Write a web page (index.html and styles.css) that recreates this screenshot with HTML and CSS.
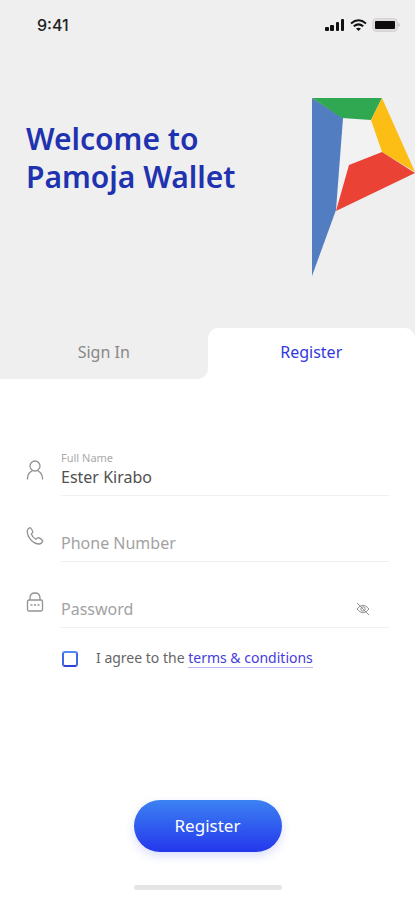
FILE: index.html
```html
<!DOCTYPE html>
<html lang="en">
<head>
<meta charset="utf-8">
<meta name="viewport" content="width=device-width, initial-scale=1">
<title>Pamoja Wallet</title>
<link rel="stylesheet" href="styles.css">
</head>
<body>
<div class="app">
  <header class="hero">
    <div class="status">
      <span class="time">9:41</span>
      <div class="indicators">
        <svg width="20" height="12" viewBox="0 0 20 12" fill="#111" aria-hidden="true">
          <rect x="0" y="8" width="4" height="4" rx="1"/><rect x="5" y="6" width="4" height="6" rx="1"/><rect x="11" y="3" width="3" height="9" rx="1"/><rect x="16" y="0" width="3" height="12" rx="1"/>
        </svg>
        <svg width="17" height="12" viewBox="0 0 17 12" fill="none" stroke="#111" stroke-width="2" aria-hidden="true">
          <path d="M1 4.4Q8.500-1.800 16 4.400M3.800 7.300Q8.500 3.500 13.200 7.300"/><path d="M6 9.600Q8.500 7.800 11 9.600L8.500 12Z" fill="#111" stroke="none"/>
        </svg>
        <svg width="28" height="14" viewBox="0 0 28 14" aria-hidden="true">
          <rect x=".5" y=".5" width="25" height="13" rx="4" fill="#dfdbdf" stroke="#d6d2d6"/><rect x="3" y="3" width="20" height="8" rx="1" fill="#0c0c0c"/><path d="M26.500 5v4q1-.500 1-2t-1-2Z" fill="#aaa"/>
        </svg>
      </div>
    </div>
    <div class="banner">
      <h1>Welcome to<br>Pamoja Wallet</h1>
      <svg class="logo" width="104" height="180" viewBox="0 0 104 180" role="img" aria-label="Pamoja logo">
        <path fill="#f2f2f2" d="M31 20L60 21 71 54 38 67 26 112Z"/>
        <path fill="#537dc1" d="M1 0L32 20 25 112 1 178Z"/>
        <path fill="#30a851" d="M1 0H71L60 22 31 20Z"/>
        <path fill="#fcbd14" d="M71 0L104 74 71 54 60 22Z"/>
        <path fill="#ea4234" d="M38 67L71 54 104 75 25 113Z"/>
      </svg>
    </div>
  </header>
  <nav class="tabs">
    <div class="cell cell-left"><button type="button" class="tab tab-signin">Sign In</button></div>
    <div class="cell cell-right"><button type="button" class="tab tab-register">Register</button></div>
  </nav>
  <form class="form">
    <div class="field">
      <svg class="icon" width="18" height="20" viewBox="0 0 18 20" aria-hidden="true"><circle cx="9" cy="6" r="5"/><path d="M1.500 19.500V18Q2 12.500 6.300 10.800M11.700 10.800Q16 12.500 16.500 18V19.500"/></svg>
      <div class="entry">
        <label for="name">Full Name</label>
        <input id="name" type="text" value="Ester Kirabo">
      </div>
    </div>
    <div class="field">
      <svg class="icon" width="18" height="20" viewBox="0 0 18 20" aria-hidden="true"><path d="M1.300 4.500Q2 2 4.300 1.600Q6 3.200 6.800 5.600Q6.800 7.200 5.300 8Q6.600 11.300 9.800 13.300Q11 11.700 12.600 11.700Q15 12.600 16.700 14.800Q16 17.600 13.500 18Q9 18.200 5 14Q1 9.500 1.300 4.500Z"/></svg>
      <div class="entry">
        <input id="phone" type="tel" placeholder="Phone Number" aria-label="Phone Number">
      </div>
    </div>
    <div class="field">
      <svg class="icon" width="18" height="20" viewBox="0 0 18 20" aria-hidden="true"><rect x="1.500" y="8" width="15" height="11" rx="1.500"/><path d="M4 8V6Q4 1 9 1T14 6V8"/><path d="M4.500 13h2M8 13h2M11.500 13h2"/></svg>
      <div class="entry entry-password">
        <input id="password" type="password" placeholder="Password" aria-label="Password">
        <button type="button" class="reveal" aria-label="Show password">
          <svg width="14" height="14" viewBox="0 0 14 14" fill="none" stroke="#929292" aria-hidden="true"><path d="M1 7Q7-.500 13 7Q7 14.500 1 7Z"/><circle cx="7" cy="7" r="2.200"/><path d="M1 1L13 13"/></svg>
        </button>
      </div>
    </div>
    <div class="agree">
      <input id="agree" type="checkbox">
      <label for="agree">I agree to the <a href="#terms">terms &amp; conditions</a></label>
    </div>
    <button type="submit" class="submit">Register</button>
  </form>
  <div class="home"></div>
</div>
</body>
</html>
```
FILE: styles.css
```css
* { box-sizing: border-box; }
body {
  margin: 0;
  background: #fff;
  font-family: "Noto Sans", sans-serif;
  font-size: 16px;
}
button, input { font: inherit; }
button { border: 0; padding: 0; cursor: pointer; }
svg { display: block; flex: none; }

.app { min-height: 100vh; display: flex; flex-direction: column; }

.hero { background: #efefef; padding-bottom: 50px; }
.status {
  display: flex;
  justify-content: space-between;
  align-items: center;
  height: 50px;
  padding: 0 15px 0 37px;
}
.time { font: 500 16px/20px Inter, sans-serif; color: #222; }
.indicators { display: flex; align-items: center; gap: 5px; }
.banner {
  display: flex;
  justify-content: space-between;
  align-items: flex-start;
  padding: 48px 0 0 26px;
}
h1 {
  margin: 22px 0 0;
  color: #1f32b0;
  font-size: 30px;
  line-height: 38px;
  font-weight: 600;
  white-space: nowrap;
}

.tabs { display: grid; grid-template-columns: 1fr 1fr; height: 51px; }
.cell { display: flex; }
.cell-left { background: #fff; }
.cell-right { background: #efefef; }
.tab { flex: 1; padding-bottom: 4px; }
.tab-signin { background: #efefef; color: #888; border-bottom-right-radius: 10px; }
.tab-register { background: #fff; color: #3339dd; border-radius: 10px 10px 0 0; }

.form {
  flex: 1;
  display: flex;
  flex-direction: column;
  padding: 68px 26px 0;
}
.field { display: flex; align-items: flex-start; height: 66px; }
.icon {
  width: 18px;
  margin: 13px 17px 0 0;
  fill: none;
  stroke: #929292;
  stroke-width: 1.3;
}
.entry {
  flex: 1;
  min-width: 0;
  height: 49px;
  display: flex;
  flex-direction: column;
  justify-content: flex-end;
  padding-bottom: 6px;
  border-bottom: 1px solid #f0f0f0;
}
.entry label { font-size: 11px; line-height: 14px; color: #aaa; }
.entry input {
  width: 100%;
  min-width: 0;
  height: 24px;
  padding: 0;
  border: 0;
  outline: 0;
  background: transparent;
  color: #505050;
}
.entry input::placeholder { color: #a2a2a2; opacity: 1; }
.entry-password { flex-direction: row; justify-content: flex-start; align-items: flex-end; padding-right: 19px; }
.reveal { background: none; height: 24px; }

.agree {
  display: flex;
  align-items: center;
  gap: 18px;
  height: 24px;
  margin: 2px 0 0 36px;
  font-size: 14px;
  color: #666;
  white-space: nowrap;
}
.agree label { line-height: 18px; padding-bottom: 2px; }
.agree input {
  appearance: none;
  flex: none;
  width: 16px;
  height: 16px;
  margin: 0;
  border: 2px solid #3c67e8;
  border-top-color: #4c8af0;
  border-bottom-color: #2c40dc;
  border-radius: 3px;
}
.agree a { color: #443ddc; text-decoration: none; border-bottom: 1px solid #b9b6f4; }

.submit {
  align-self: center;
  width: 148px;
  height: 52px;
  margin-top: auto;
  padding-bottom: 2px;
  border-radius: 26px;
  background: linear-gradient(#3c82f2, #2437ec);
  box-shadow: 0 4px 10px rgba(50, 70, 240, .18);
  color: #fff;
  font-size: 17px;
}
.home {
  align-self: center;
  width: 148px;
  height: 5px;
  margin: 33px 0 10px;
  border-radius: 3px;
  background: #e5e5e5;
}
```
